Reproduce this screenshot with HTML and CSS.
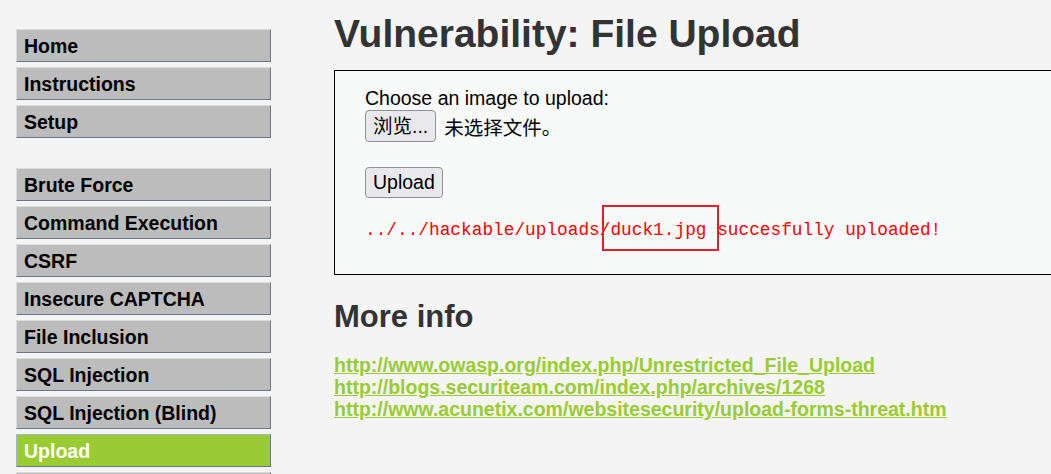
FILE: index.html
```html
<!DOCTYPE html>
<html>
<head>
<meta charset="utf-8">
<link rel="stylesheet" href="styles.css">
</head>
<body>
<div class="page">
  <nav class="menu">
    <ul class="group">
      <li><a>Home</a></li>
      <li><a>Instructions</a></li>
      <li><a>Setup</a></li>
    </ul>
    <ul class="group">
      <li><a>Brute Force</a></li>
      <li><a>Command Execution</a></li>
      <li><a>CSRF</a></li>
      <li><a>Insecure CAPTCHA</a></li>
      <li><a>File Inclusion</a></li>
      <li><a>SQL Injection</a></li>
      <li><a>SQL Injection (Blind)</a></li>
      <li class="selected"><a>Upload</a></li>
      <li><a class="empty"></a></li>
    </ul>
  </nav>
  <main class="body">
    <h1 class="title">Vulnerability: File Upload</h1>
    <div class="vuln">
      <div class="label">Choose an image to upload:</div>
      <div class="filerow">
        <span class="btn browse">浏览...</span>
        <span class="nofile">未选择文件。</span>
      </div>
      <div class="uprow"><span class="btn upload">Upload</span></div>
      <pre class="msg">../../hackable/uploads<span class="mark">/duck1.jpg </span>succesfully uploaded!</pre>
    </div>
    <h2 class="more">More info</h2>
    <ul class="links">
      <li><a>http://www.owasp.org/index.php/Unrestricted_File_Upload</a></li>
      <li><a>http://blogs.securiteam.com/index.php/archives/1268</a></li>
      <li><a>http://www.acunetix.com/websitesecurity/upload-forms-threat.htm</a></li>
    </ul>
  </main>
</div>
</body>
</html>
```
FILE: styles.css
```css
html, body {
  margin: 0;
  padding: 0;
  background: #f4f4f4;
  overflow: hidden;
  height: 474px;
}
.page {
  display: flex;
  align-items: flex-start;
  font-family: "Liberation Sans", Arial, sans-serif;
}
.menu {
  width: 255px;
  margin-left: 16px;
  padding-top: 29px;
  flex: none;
}
.group {
  list-style: none;
  margin: 0 0 30px 0;
  padding: 0;
  display: flex;
  flex-direction: column;
  gap: 5px;
}
.group li a {
  display: block;
  height: 31px;
  line-height: 32px;
  padding-left: 7px;
  background: #bcbcbc;
  border: 1px solid;
  border-color: #dcdcdc #6a7590 #6a7590 #dcdcdc;
  font-weight: bold;
  font-size: 19.5px;
  color: #000;
}
.group li.selected a {
  background: #99cc33;
  color: #fff;
  border-color: #a6b3cc #6a7590 #6a7590 #a6b3cc;
}
.body {
  margin-left: 63px;
  flex: 1;
  min-width: 0;
}
.title {
  margin: 12px 0 0 0;
  font-size: 39px;
  line-height: 43px;
  color: #333;
  font-weight: bold;
}
.vuln {
  margin-top: 15px;
  height: 205px;
  width: 760px;
  background: #f8f9f9;
  border: 1px solid #000;
  padding: 16px 0 0 30px;
  box-sizing: border-box;
  font-size: 19.5px;
  color: #000;
}
.label {
  line-height: 22px;
}
.filerow {
  display: flex;
  align-items: center;
  gap: 8px;
  margin-top: 1px;
}
.btn {
  display: inline-block;
  background: #e9e9ed;
  border: 1px solid #8f8f9d;
  border-radius: 4px;
  box-sizing: border-box;
  height: 32px;
  line-height: 30px;
  padding: 0 7px;
  font-size: 19.5px;
}
.browse, .nofile {
  font-family: "Liberation Sans", "Noto Sans CJK SC", sans-serif;
}
.uprow {
  margin-top: 25px;
}
.upload {
  height: 31px;
  line-height: 29px;
}
.msg {
  margin: 21px 0 0 0;
  font-family: "Liberation Mono", "DejaVu Sans Mono", monospace;
  font-size: 17.8px;
  line-height: 22px;
  color: #ff0000;
}
.mark {
  position: relative;
}
.mark::after {
  content: "";
  position: absolute;
  left: 2px;
  top: -15px;
  width: 113px;
  height: 42px;
  border: 2px solid #e3202a;
}
.more {
  margin: 24px 0 0 0;
  font-size: 31px;
  line-height: 36px;
  color: #333;
  font-weight: bold;
}
.links {
  list-style: none;
  margin: 19px 0 0 0;
  padding: 0;
}
.links li {
  line-height: 22px;
  font-size: 19.5px;
}
.links a {
  color: #99cc33;
  text-decoration: underline;
  font-weight: bold;
}
```
